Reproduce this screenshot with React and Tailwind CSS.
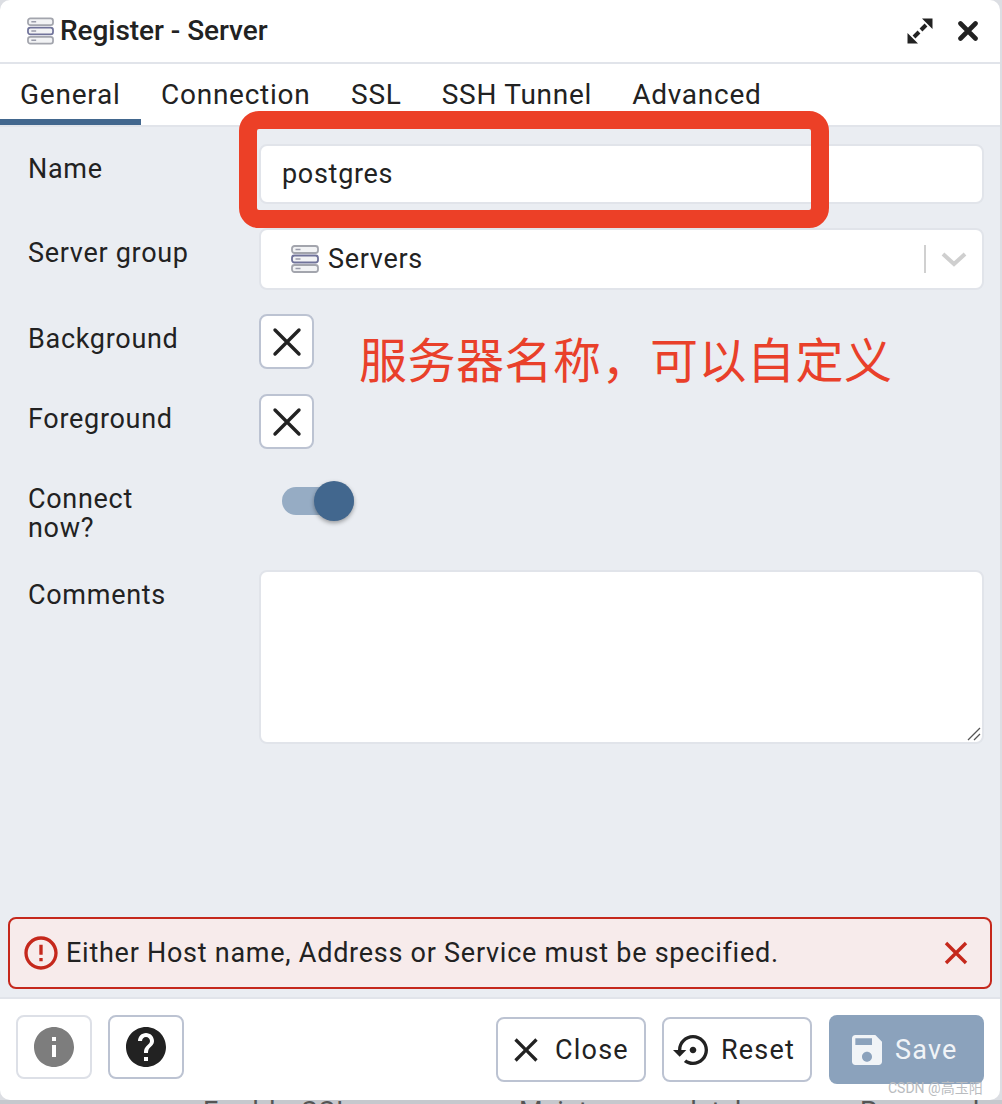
import React from 'react';

const font = { fontFamily: '"Roboto", "Noto Sans CJK SC", sans-serif' };

function ServerIcon({ className }) {
  return (
    <svg className={className} viewBox="0 0 28 28" fill="none">
      <rect x="1" y="1" width="26" height="7" rx="2.5" fill="#f2f3f5" stroke="#a3a5ad" strokeWidth="1.8" />
      <rect x="1" y="10.5" width="26" height="7" rx="2.5" fill="#f2f3f5" stroke="#70739a" strokeWidth="1.8" />
      <rect x="1" y="20" width="26" height="7" rx="2.5" fill="#f2f3f5" stroke="#a3a5ad" strokeWidth="1.8" />
      <path d="M4.5 4.5h5M4.5 14h5M4.5 23.5h5" stroke="#9a9caa" strokeWidth="1.5" />
    </svg>
  );
}

function Mat({ d, className }) {
  return (
    <svg className={className} viewBox="0 0 24 24" fill="currentColor">
      <path d={d} />
    </svg>
  );
}

const closePath = 'M19 6.41 17.59 5 12 10.59 6.41 5 5 6.41 10.59 12 5 17.59 6.41 19 12 13.41 17.59 19 19 17.59 13.41 12z';

function ColorBox() {
  return (
    <div className="w-[55px] h-[55px] rounded-[8px] border-2 border-[#bcc3d2] bg-white flex items-center justify-center text-[#222]">
      <svg className="w-[30px] h-[30px]" viewBox="0 0 30 30" fill="none" stroke="currentColor" strokeWidth="3.4" strokeLinecap="round">
        <path d="M3 3l24 24M27 3L3 27" />
      </svg>
    </div>
  );
}

function Row({ label, className = '', labelClass = 'pt-[11px] leading-[28px]', children }) {
  return (
    <div className={`flex items-start ${className}`}>
      <div className={`w-[231px] text-[27px] tracking-[0.7px] text-[#222] ${labelClass}`}>{label}</div>
      {children}
    </div>
  );
}

export default function App() {
  return (
    <div style={font} className="relative w-[1002px] h-[1104px] overflow-hidden bg-[#dcdee3]">
      {/* page behind the dialog */}
      <div className="absolute left-0 top-[1100px] w-full h-[4px] bg-[#c6c8cd]" />
      <div className="absolute left-0 top-[1097px] w-full text-[27px] leading-[30px] text-[#555]">
        <span className="absolute left-[203px] top-0 tracking-[1.5px]">Enable SSL</span>
        <span className="absolute left-[519px] top-0">Maintenance database</span>
        <span className="absolute left-[860px] top-0">Password</span>
      </div>

      <div className="relative w-[1000px] h-[1100px] bg-white rounded-[10px] overflow-hidden flex flex-col">
        {/* title bar */}
        <div className="h-[64px] shrink-0 border-b-2 border-[#e1e4ea] flex items-center pl-[27px] pr-[20px]">
          <ServerIcon className="w-[27px] h-[28px] mr-[6px]" />
          <span className="text-[28px] font-medium text-[#222] tracking-[-0.05px]">Register - Server</span>
          <div className="ml-auto flex items-center text-[#222]">
            <svg className="w-[26px] h-[26px] mr-[25px]" viewBox="0 0 26 26" fill="none" stroke="currentColor">
              <path d="M15 .5h10.5V11zM11 25.5H.5V15z" fill="currentColor" strokeWidth="0" />
              <path d="M19 7l-5 5M7 19l5-5" strokeWidth="4" />
            </svg>
            <svg className="w-[20px] h-[20px] mr-[2px]" viewBox="0 0 20 20" fill="none" stroke="currentColor" strokeWidth="4.6" strokeLinecap="round">
              <path d="M2.5 2.5l15 15M17.5 2.5l-15 15" />
            </svg>
          </div>
        </div>

        {/* tabs */}
        <div className="h-[63px] shrink-0 border-b-2 border-[#e1e4ea] flex text-[28px] tracking-[0.75px] text-[#222]">
          <div className="w-[141px] h-[61px] pl-[20px] pt-[14px] border-b-[6px] border-[#42678e] leading-[34px]">General</div>
          <div className="pl-[20px] pt-[14px] leading-[34px]">Connection</div>
          <div className="pl-[40.5px] pt-[14px] leading-[34px]">SSL</div>
          <div className="pl-[40px] pt-[14px] leading-[34px]">SSH Tunnel</div>
          <div className="pl-[40px] pt-[14px] leading-[34px]">Advanced</div>
        </div>

        {/* form */}
        <div className="flex-1 bg-[#eaedf2] flex flex-col pl-[28px] pr-[16px] pt-[17px]">
          <Row label="Name">
            <div className="flex-1 h-[60px] rounded-[8px] border-2 border-[#e1e4ea] bg-white flex items-center pl-[21px] pt-[1px] text-[27px] tracking-[0.7px] text-[#222]">postgres</div>
          </Row>
          <Row label="Server group" className="mt-[24px]">
            <div className="flex-1 h-[62px] rounded-[8px] border-2 border-[#e1e4ea] bg-white flex items-center pl-[30px] text-[27px] tracking-[0.7px] text-[#222]">
              <ServerIcon className="w-[28px] h-[28px] mr-[9px]" />
              Servers
              <div className="ml-auto w-[2px] h-[28px] bg-[#d0d0d0]" />
              <svg className="w-[26px] h-[16px] ml-[15px] mr-[15px]" viewBox="0 0 26 16" fill="none" stroke="#cfcfcf" strokeWidth="4">
                <path d="M2 3l11 10L24 3" />
              </svg>
            </div>
          </Row>
          <Row label="Background" className="mt-[24px]">
            <ColorBox />
          </Row>
          <Row label="Foreground" className="mt-[25px]">
            <ColorBox />
          </Row>
          <Row label={<>Connect<br />now?</>} className="mt-[32px]" labelClass="pt-[4px] leading-[29px]">
            <div className="relative w-[95px] h-[40px]">
              <div className="absolute left-[23px] top-[6px] w-[72px] h-[28px] rounded-full bg-[#96acc4]" />
              <div className="absolute left-[55px] top-0 w-[40px] h-[40px] rounded-full bg-[#42678e] shadow-[0_2px_4px_rgba(0,0,0,0.35)]" />
            </div>
          </Row>
          <Row label="Comments" className="mt-[27px]">
            <div className="relative flex-1 h-[174px] rounded-[8px] border-2 border-[#e1e4ea] bg-white">
              <svg className="absolute right-[1px] bottom-[1px] w-[14px] h-[14px]" viewBox="0 0 14 14" fill="none" stroke="#555" strokeWidth="1.3">
                <path d="M1 13L13 1M7 13l6-6" />
              </svg>
            </div>
          </Row>

          {/* error */}
          <div className="mt-auto -ml-[20px] -mr-[8px] mb-[8px] h-[72px] rounded-[8px] border-2 border-[#c5281c] bg-[#f7ebeb] flex items-center pl-[11px] pr-[22px] text-[27px] tracking-[0.74px] text-[#222]">
            <Mat d="M11 15h2v2h-2zm0-8h2v6h-2zm.99-5C6.47 2 2 6.48 2 12s4.47 10 9.99 10C17.52 22 22 17.52 22 12S17.52 2 11.99 2zM12 20c-4.42 0-8-3.58-8-8s3.58-8 8-8 8 3.58 8 8-3.58 8-8 8z" className="w-[40px] h-[40px] text-[#c5281c] mr-[5px]" />
            Either Host name, Address or Service must be specified.
            <svg className="w-[24px] h-[24px] ml-auto text-[#c5281c]" viewBox="0 0 24 24" fill="none" stroke="currentColor" strokeWidth="3.4">
              <path d="M2 2l20 20M22 2L2 22" />
            </svg>
          </div>
        </div>

        {/* footer */}
        <div className="h-[103px] shrink-0 border-t-2 border-[#e1e4ea] flex items-start pl-[16px] pr-[16px] pt-[16px]">
          <button className="w-[76px] h-[64px] rounded-[8px] border-2 border-[#dde0e7] flex items-center justify-center text-[#7d7d7d]">
            <Mat d="M12 2C6.48 2 2 6.48 2 12s4.48 10 10 10 10-4.48 10-10S17.52 2 12 2zm1 15h-2v-6h2v6zm0-8h-2V7h2v2z" className="w-[48px] h-[48px]" />
          </button>
          <button className="ml-[16px] w-[76px] h-[64px] rounded-[8px] border-2 border-[#bcc3d2] flex items-center justify-center text-[#222]">
            <Mat d="M12 2C6.48 2 2 6.48 2 12s4.48 10 10 10 10-4.48 10-10S17.52 2 12 2zm1 17h-2v-2h2v2zm2.07-7.75l-.9.92C13.45 12.9 13 13.5 13 15h-2v-.5c0-1.1.45-2.1 1.17-2.83l1.24-1.26c.37-.36.59-.86.59-1.41 0-1.1-.9-2-2-2s-2 .9-2 2H8c0-2.21 1.79-4 4-4s4 1.79 4 4c0 .88-.36 1.68-.93 2.25z" className="w-[48px] h-[48px]" />
          </button>
          <button className="ml-auto mt-[2px] w-[150px] h-[65px] rounded-[8px] border-2 border-[#bcc3d2] flex items-center pl-[8px] pt-[1px] text-[27px] tracking-[1.2px] text-[#222]">
            <Mat d={closePath} className="w-[40px] h-[40px] mr-[9px]" />
            Close
          </button>
          <button className="ml-[16px] mt-[2px] w-[150px] h-[65px] rounded-[8px] border-2 border-[#bcc3d2] flex items-center pl-[9px] pt-[1px] text-[27px] tracking-[1.2px] text-[#222]">
            <Mat d="M14 12c0-1.1-.9-2-2-2s-2 .9-2 2 .9 2 2 2 2-.9 2-2zm-2-9c-4.97 0-9 4.03-9 9H0l4 4 4-4H5c0-3.87 3.13-7 7-7s7 3.13 7 7-3.13 7-7 7c-1.51 0-2.91-.49-4.06-1.3l-1.42 1.44C8.04 20.3 9.94 21 12 21c4.97 0 9-4.03 9-9s-4.03-9-9-9z" className="w-[40px] h-[40px] mr-[8px]" />
            Reset
          </button>
          <button className="ml-[17px] w-[155px] h-[69px] rounded-[8px] bg-[#8ba2bc] flex items-center pl-[18px] pt-[1px] text-[27px] tracking-[1.2px] text-[#f1f4f7]">
            <Mat d="M17 3H5c-1.11 0-2 .9-2 2v14c0 1.1.89 2 2 2h14c1.1 0 2-.9 2-2V7l-4-4zm-5 16c-1.66 0-3-1.34-3-3s1.34-3 3-3 3 1.34 3 3-1.34 3-3 3zm3-10H5V5h10v4z" className="w-[40px] h-[40px] mr-[8px]" />
            Save
          </button>
        </div>
      </div>

      {/* annotation */}
      <div className="absolute left-[239px] top-[111px] w-[590px] h-[117px] rounded-[20px] border-[18px] border-[#ec4027] pointer-events-none" />
      <div className="absolute left-[359px] top-[326px] text-[48px] tracking-[0.5px] leading-[62px] text-[#e9402a] whitespace-nowrap" style={{ fontFamily: '"Noto Sans CJK SC", sans-serif' }}>
        服务器名称，可以自定义
      </div>
      <div className="absolute left-[888px] top-[1079px] text-[14px] leading-[18px] text-[#b9bcc0] whitespace-nowrap">CSDN @高玉阳</div>
    </div>
  );
}
